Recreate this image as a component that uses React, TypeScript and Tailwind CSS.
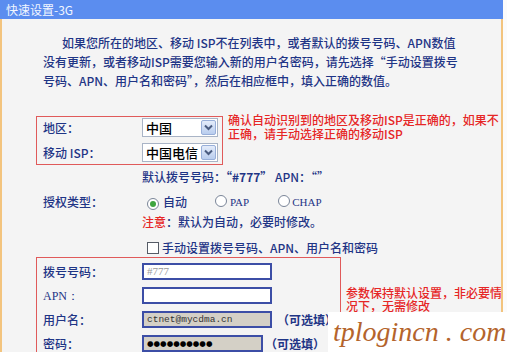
import React from "react";

const navy = "text-[#1f3586]";

function Chevron() {
  return (
    <div className="w-[15px] h-[15px] mr-[1px] flex items-center justify-center rounded-[2px] border border-[#98afd9] bg-gradient-to-b from-[#e4ecfa] to-[#b9cdee]">
      <svg width="9" height="7" viewBox="0 0 9 7">
        <path d="M1 1.5 L4.5 5 L8 1.5" fill="none" stroke="#4a5c80" strokeWidth="2" />
      </svg>
    </div>
  );
}

function Select({ text }: { text: string }) {
  return (
    <div className="w-[76px] h-[19px] flex items-center justify-between bg-white border border-[#a9b4c6]">
      <span className="pl-[3px] text-[13px] leading-[17px] text-black">{text}</span>
      <Chevron />
    </div>
  );
}

function Radio({ checked }: { checked?: boolean }) {
  return (
    <span className="inline-flex w-[12px] h-[12px] rounded-full border border-[#7a8598] bg-white items-center justify-center">
      {checked && <span className="w-[6px] h-[6px] rounded-full bg-[#3fa53f]" />}
    </span>
  );
}

export default function App() {
  return (
    <div
      className="relative w-[507px] h-[352px] overflow-hidden bg-[#fbfbfb]"
      style={{ fontFamily: '"Noto Sans CJK SC", "Liberation Sans", sans-serif' }}
    >
      <div className="w-[503px]">
        <div className="h-[19px] bg-[#5b8def] pl-[6px] text-[12px] leading-[19px] text-[#f2f6ff]">
          快速设置-3G
        </div>
        <div className={`h-[333px] overflow-hidden bg-[#f4f4f4] border-l-2 border-r-2 border-[#f3c47e] font-medium ${navy}`}>
          <div className="pt-[14px] pl-[41px] text-[12px] leading-[19px] whitespace-nowrap">
            <div className="pl-[19px]">如果您所在的地区、移动 ISP不在列表中，或者默认的拨号号码、APN数值</div>
            <div>没有更新，或者移动ISP需要您输入新的用户名密码，请先选择“手动设置拨号</div>
            <div>号码、APN、用户名和密码”，然后在相应框中，填入正确的数值。</div>
          </div>

          <div className="mt-[26px] pl-[34px] flex items-start">
            <div className="w-[187px] h-[49px] border border-[#e05a5a] flex flex-col gap-[6px] pt-[1px]">
              <div className="flex items-center h-[19px]">
                <div className="w-[105px] pl-[6px] text-[12px]">地区：</div>
                <Select text="中国" />
              </div>
              <div className="flex items-center h-[19px]">
                <div className="w-[105px] pl-[6px] text-[12px]">移动 ISP：</div>
                <Select text="中国电信" />
              </div>
            </div>
            <div className="ml-[5px] -mt-[3px] text-[12px] leading-[14px] text-[#e62626] whitespace-nowrap">
              <div>确认自动识别到的地区及移动ISP是正确的，如果不</div>
              <div>正确，请手动选择正确的移动ISP</div>
            </div>
          </div>

          <div className="mt-[4px] pl-[140px] h-[16px] text-[12px] leading-[16px] whitespace-nowrap">
            默认拨号号码：<b>“#777”</b> APN：“”
          </div>

          <div className="mt-[9px] flex items-center h-[16px] text-[12px]">
            <div className="w-[140px] pl-[41px]">授权类型：</div>
            <div className="flex items-center">
              <span className="ml-[5px]"><Radio checked /></span>
              <span className="ml-[4px]">自动</span>
              <span className="ml-[28px]"><Radio /></span>
              <span className="ml-[3px] text-[11px]" style={{ fontFamily: '"Liberation Serif", serif' }}>PAP</span>
              <span className="ml-[29px]"><Radio /></span>
              <span className="ml-[2px] text-[11px]" style={{ fontFamily: '"Liberation Serif", serif' }}>CHAP</span>
            </div>
          </div>

          <div className="mt-[4px] pl-[140px] h-[16px] text-[12px] leading-[16px]">
            <span className="text-[#e62626]">注意</span>：默认为自动，必要时修改。
          </div>

          <div className="mt-[10px] pl-[145px] h-[16px] flex items-center text-[12px] leading-[16px]">
            <span className="w-[12px] h-[12px] border border-[#555b66] bg-white" />
            <span className="ml-[3px]">手动设置拨号号码、APN、用户名和密码</span>
          </div>

          <div className="mt-[1px] pl-[34px] flex items-start">
            <div className="w-[305px] h-[100px] shrink-0 border border-[#e05a5a] flex flex-col gap-[7px] pt-[5px] text-[12px]">
              <div className="flex items-center h-[17px]">
                <div className="w-[105px] pl-[6px]">拨号号码：</div>
                <div className="w-[130px] h-[17px] border-2 border-[#3c4ea6] bg-white pl-[3px] text-[11px] leading-[13px] font-normal text-[#9a9a9a]" style={{ fontFamily: '"Liberation Serif", serif' }}>#777</div>
              </div>
              <div className="flex items-center h-[17px]">
                <div className="w-[105px] pl-[6px]" style={{ fontFamily: '"Liberation Serif", serif' }}>APN：</div>
                <div className="w-[130px] h-[17px] border-2 border-[#3c4ea6] bg-white" />
              </div>
              <div className="flex items-center h-[17px]">
                <div className="w-[105px] pl-[6px]">用户名：</div>
                <div className="w-[130px] h-[17px] border-2 border-[#3c4ea6] bg-[#d4d0c6] pl-[3px] text-[9.5px] leading-[13px] font-normal text-[#333]" style={{ fontFamily: '"Liberation Mono", monospace' }}>ctnet@mycdma.cn</div>
                <span className="ml-[5px] font-bold whitespace-nowrap">（可选填）</span>
              </div>
              <div className="flex items-center h-[17px]">
                <div className="w-[105px] pl-[6px]">密码：</div>
                <div className="w-[121px] h-[17px] border-2 border-[#3c4ea6] bg-[#d4d0c6] pl-[3px] text-[7.5px] leading-[13px] font-normal text-black" style={{ fontFamily: '"DejaVu Sans", sans-serif' }}>●●●●●●●●●●</div>
                <span className="ml-[2px] font-bold whitespace-nowrap">（可选填）</span>
              </div>
            </div>
            <div className="ml-[5px] mt-[29px] text-[12px] leading-[13px] text-[#e62626] whitespace-nowrap">
              <div>参数保持默认设置，非必要情</div>
              <div>况下，无需修改</div>
            </div>
          </div>
        </div>
      </div>

      <div
        className="absolute left-[328px] top-[312px] w-[179px] h-[40px] bg-white pl-[5px] text-[28px] leading-[40px] italic text-[#b4642c] whitespace-nowrap"
        style={{ fontFamily: '"Liberation Serif", serif' }}
      >
        tplogincn . com
      </div>
    </div>
  );
}
